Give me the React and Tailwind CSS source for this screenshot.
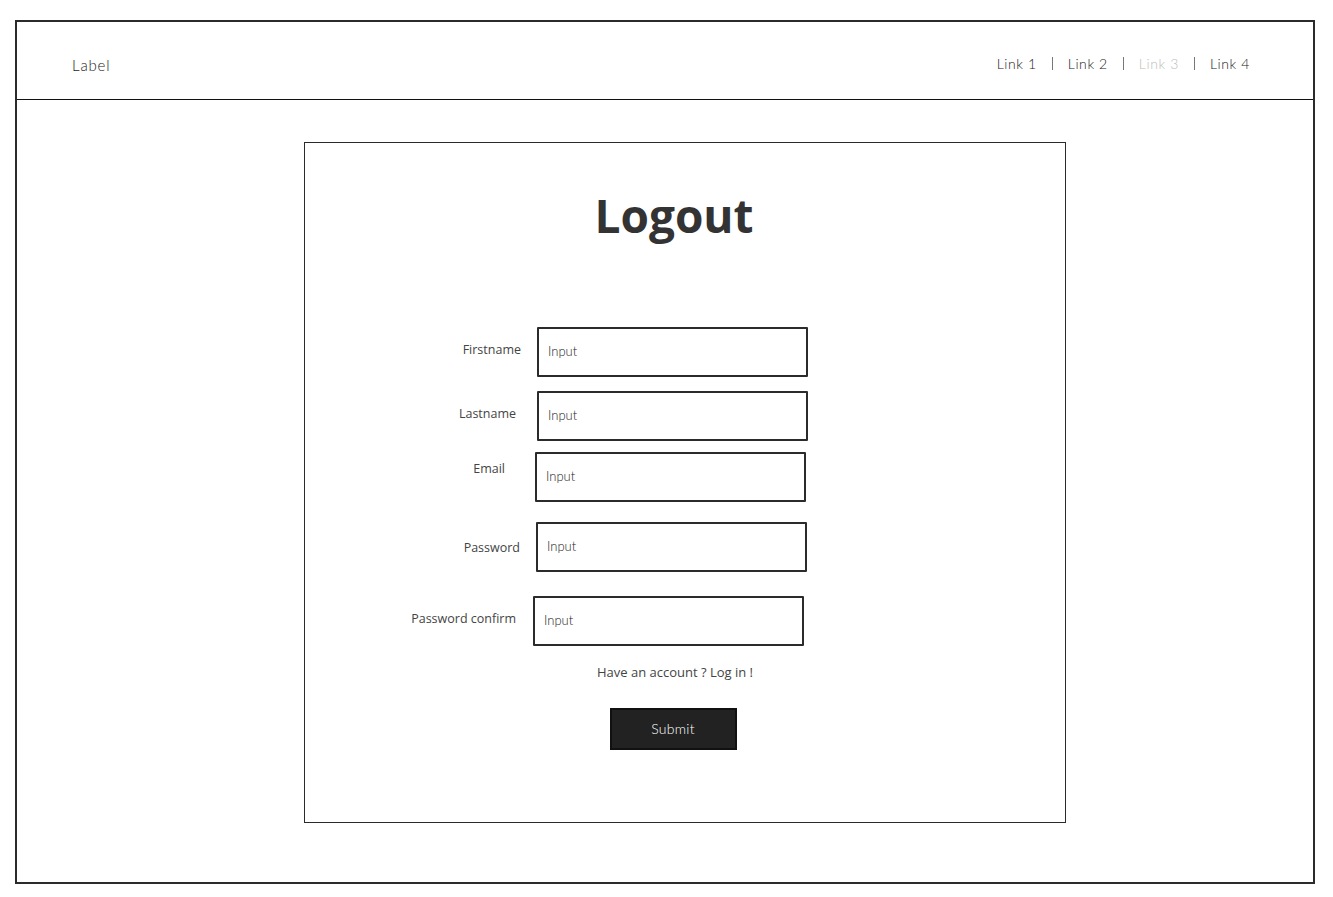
const hand = { fontFamily: '"Lato", "DejaVu Sans", sans-serif' };
const sans = { fontFamily: '"Open Sans", "Noto Sans", sans-serif' };

const links = [
  { label: "Link 1", muted: false },
  { label: "Link 2", muted: false },
  { label: "Link 3", muted: true },
  { label: "Link 4", muted: false },
];

const Field = ({ label, className, labelClass = "", inputClass = "" }) => (
  <div className={`flex ${className}`}>
    <label
      className={`w-[120px] shrink-0 text-right text-[12.5px] text-[#444] ${labelClass}`}
      style={sans}
    >
      {label}
    </label>
    <div
      className={`flex h-[50px] w-[271px] items-center border-2 border-[#2b2b2b] rounded-[1px] pl-[9px] text-[13px] font-light text-[#222] ${inputClass}`}
      style={hand}
    >
      Input
    </div>
  </div>
);

export default function App() {
  return (
    <div className="min-h-[897px] w-[1333px] bg-white pt-[20px] pl-[15px]">
      <div className="flex h-[864px] w-[1300px] flex-col border-2 border-[#2b2b2b]">
        <header className="flex h-[78px] shrink-0 items-center justify-between border-b border-[#111] pl-[55px] pr-[63px]">
          <span className="mt-[10px] text-[15px] font-light tracking-[0.8px] text-[#222]" style={hand}>
            Label
          </span>
          <nav className="mt-[6px] flex items-center text-[14px] font-light tracking-[0.6px]" style={hand}>
            {links.map((l, i) => (
              <div key={l.label} className="flex items-center">
                {i > 0 && <span className="mx-[15px] h-[13px] w-px bg-[#777]" />}
                <a className={l.muted ? "text-[#bdbdbd]" : "text-[#222]"}>{l.label}</a>
              </div>
            ))}
          </nav>
        </header>

        <main className="flex-1 pt-[42px] pl-[287px]">
          <div className="flex h-[681px] w-[762px] flex-col border-[1.5px] border-[#2b2b2b]">
            <h1
              className="mt-[44px] pr-[22px] text-center text-[46px] leading-[56px] font-bold text-[#333]"
              style={sans}
            >
              Logout
            </h1>

            <div className="flex flex-col pl-[94px]">
              <Field label="Firstname" className="mt-[84px] ml-[2px]" labelClass="mt-[14px]" inputClass="ml-[16px]" />
              <Field label="Lastname" className="mt-[14px] ml-[-3px]" labelClass="mt-[14px]" inputClass="ml-[21px]" />
              <Field label="Email" className="mt-[11px]" labelClass="mt-[8px] pr-[14px]" inputClass="ml-[16px]" />
              <Field label="Password" className="mt-[20px] ml-[1px]" labelClass="mt-[17px]" inputClass="ml-[16px]" />
              <Field label="Password confirm" className="mt-[24px] ml-[-3px]" labelClass="mt-[14px]" inputClass="ml-[17px]" />
            </div>

            <p className="mt-[17px] pr-[20px] text-center text-[13px] text-[#444]" style={sans}>
              Have an account ? Log in !
            </p>

            <div className="mt-[25px] flex justify-center">
              <button
                className="ml-[-24px] h-[42px] w-[127px] border-2 border-[#111] bg-[#222] text-[14px] font-light tracking-[0.3px] text-white"
                style={hand}
              >
                Submit
              </button>
            </div>
          </div>
        </main>
      </div>
    </div>
  );
}
